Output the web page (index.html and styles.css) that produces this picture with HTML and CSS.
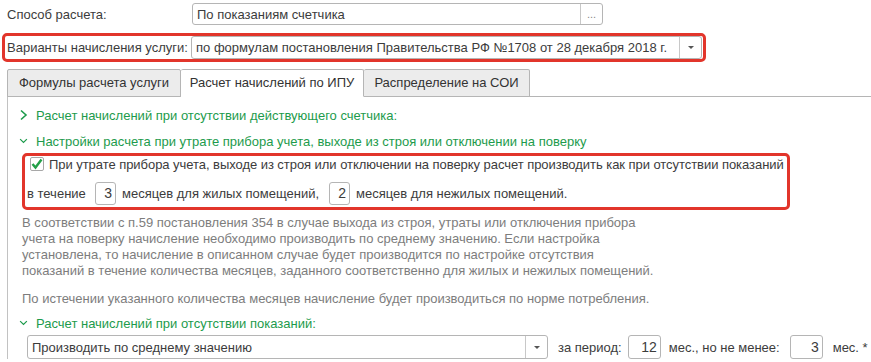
FILE: index.html
```html
<!DOCTYPE html>
<html lang="ru">
  <head>
    <meta charset="UTF-8" />
    <title>Способ расчета</title>
    <link rel="stylesheet" href="styles.css">
  </head>
  <body>
    <div class="forma">
      <div class="fila">
        <span class="etiqueta">Способ расчета:</span>
        <div class="campo campo-metodo">
          <span class="valor">По показаниям счетчика</span>
          <span class="boton-ver">...</span>
        </div>
      </div>

      <div class="fila marcada">
        <span class="etiqueta">Варианты начисления услуги:</span>
        <div class="campo campo-variante">
          <span class="valor">по формулам постановления Правительства РФ №1708 от 28 декабря 2018 г.</span>
          <span class="boton-lista"><span class="flecha"></span></span>
        </div>
      </div>

      <div class="pestanas">
        <div class="pestana">Формулы расчета услуги</div>
        <div class="pestana activa">Расчет начислений по ИПУ</div>
        <div class="pestana">Распределение на СОИ</div>
      </div>

      <div class="panel">
        <div class="grupo">
          <svg class="chevron" width="9" height="12" viewBox="0 0 9 12"><path d="M2 1.5 L7 6 L2 10.5" fill="none" stroke="#1d9b4c" stroke-width="1.6"/></svg>
          Расчет начислений при отсутствии действующего счетчика:
        </div>
        <div class="grupo">
          <svg class="chevron" width="9" height="12" viewBox="0 0 12 12"><path d="M1.5 3.5 L6 8 L10.5 3.5" fill="none" stroke="#1d9b4c" stroke-width="1.6"/></svg>
          Настройки расчета при утрате прибора учета, выходе из строя или отключении на поверку
        </div>

        <div class="caja-roja">
          <div class="linea-check">
            <span class="check">
              <svg width="14" height="14" viewBox="0 0 14 14"><path d="M2.5 7 L5.5 10.5 L11.5 2.5" fill="none" stroke="#23a048" stroke-width="2.4"/></svg>
            </span>
            При утрате прибора учета, выходе из строя или отключении на поверку расчет производить как при отсутствии показаний
          </div>
          <div class="linea-meses">
            <span>в течение</span>
            <span class="numero n-corto">3</span>
            <span>месяцев для жилых помещений,</span>
            <span class="numero n-corto">2</span>
            <span>месяцев для нежилых помещений.</span>
          </div>
        </div>

        <p class="nota">
          В соответствии с п.59 постановления 354 в случае выхода из строя, утраты или отключения прибора<br>
          учета на поверку начисление необходимо производить по среднему значению. Если настройка<br>
          установлена, то начисление в описанном случае будет производится по настройке отсутствия<br>
          показаний в течение количества месяцев, заданного соответственно для жилых и нежилых помещений.
        </p>
        <p class="nota nota-2">По истечении указанного количества месяцев начисление будет производиться по норме потребления.</p>

        <div class="grupo grupo-3">
          <svg class="chevron" width="9" height="12" viewBox="0 0 12 12"><path d="M1.5 3.5 L6 8 L10.5 3.5" fill="none" stroke="#1d9b4c" stroke-width="1.6"/></svg>
          Расчет начислений при отсутствии показаний:
        </div>

        <div class="linea-final">
          <div class="campo campo-promedio">
            <span class="valor">Производить по среднему значению</span>
            <span class="boton-lista"><span class="flecha"></span></span>
          </div>
          <span class="texto-periodo">за период:</span>
          <span class="numero n-largo">12</span>
          <span class="texto-menos">мес., но не менее:</span>
          <span class="numero n-largo">3</span>
          <span class="texto-mes">мес. *</span>
        </div>
      </div>
    </div>
  </body>
</html>
```

FILE: styles.css
```css
body {
  margin: 0;
  font-family: "Liberation Sans", Arial, sans-serif;
  font-size: 13px;
  color: #3c3c3c;
  background: white;
  overflow: hidden;
}

.forma {
  padding-top: 3px;
}

.fila {
  display: flex;
  align-items: center;
  height: 22px;
  padding-left: 7px;
}

.etiqueta {
  width: 185px;
  flex-shrink: 0;
}

/* Campos de entrada con borde gris redondeado */
.campo {
  display: flex;
  align-items: center;
  border: 1px solid #b5b5b5;
  border-radius: 3px;
  box-sizing: border-box;
  background: white;
}

.campo .valor {
  flex: 1;
  padding-left: 4px;
  white-space: nowrap;
  overflow: hidden;
}

.campo-metodo {
  width: 411px;
  height: 22px;
}

.boton-ver,
.boton-lista {
  width: 21px;
  height: 100%;
  border-left: 1px solid #c8c8c8;
  display: flex;
  align-items: center;
  justify-content: center;
  color: #888;
  font-size: 11px;
}

.flecha {
  width: 0;
  height: 0;
  border-left: 3px solid transparent;
  border-right: 3px solid transparent;
  border-top: 3px solid #555;
}

/* Fila marcada en rojo */
.marcada {
  margin: 8px 0 0 2px;
  width: 704px;
  height: 29px;
  box-sizing: border-box;
  border: 3px solid #e2352b;
  border-radius: 5px;
  padding-left: 2px;
}

.marcada .etiqueta {
  width: 184px;
}

.campo-variante {
  width: 511px;
  height: 23px;
}

/* Pestañas */
.pestanas {
  display: flex;
  margin: 7px 0 0 7px;
  border-bottom: 1px solid #b5b5b5;
  height: 27px;
}

.pestana {
  box-sizing: border-box;
  height: 28px;
  line-height: 26px;
  text-align: center;
  white-space: nowrap;
  background: #ececec;
  border: 1px solid #b5b5b5;
  border-left: none;
  border-radius: 2px 2px 0 0;
  color: #333;
}

.pestana:first-child {
  border-left: 1px solid #b5b5b5;
  width: 174px;
}

.pestana.activa {
  background: white;
  border-bottom-color: white;
  width: 183px;
}

.pestanas .pestana:last-child {
  width: 166px;
}

.panel {
  margin-left: 7px;
  border-left: 1px solid #c2c2c2;
  padding: 10px 0 0 11px;
}

.grupo {
  display: flex;
  align-items: center;
  height: 16px;
  color: #1d9b4c;
  margin-bottom: 10px;
}

.chevron {
  margin-right: 8px;
}

.caja-roja {
  margin-left: 3px;
  width: 768px;
  box-sizing: border-box;
  border: 3px solid #e2352b;
  border-radius: 5px;
  padding: 0 0 2px 2px;
  margin-top: -6px;
}

.linea-check {
  display: flex;
  align-items: center;
  height: 16px;
  white-space: nowrap;
  padding-left: 3px;
  letter-spacing: -0.05px;
}

.check {
  width: 14px;
  height: 14px;
  box-sizing: border-box;
  border: 1px solid #a8a8a8;
  border-radius: 2px;
  margin-right: 5px;
  display: flex;
  align-items: center;
  justify-content: center;
}

.check svg {
  flex-shrink: 0;
}

.linea-meses {
  display: flex;
  align-items: center;
  margin-top: 10px;
  height: 23px;
}

.numero {
  box-sizing: border-box;
  height: 23px;
  border: 1px solid #b5b5b5;
  border-radius: 3px;
  text-align: right;
  padding-right: 3px;
  line-height: 21px;
  font-size: 14px;
}

.n-corto {
  width: 21px;
  margin: 0 6px 0 0;
}

.linea-meses span:first-child {
  width: 68px;
}

.linea-meses span:nth-child(3) {
  width: 207px;
}

.nota {
  margin: 5px 0 0 3px;
  line-height: 16px;
  color: #7d7d7d;
}

.nota-2 {
  margin-top: 12px;
}

.grupo-3 {
  margin-top: 8px;
  margin-bottom: 4px;
}

.linea-final {
  display: flex;
  align-items: center;
  height: 24px;
  padding-left: 8px;
}

.campo-promedio {
  width: 521px;
  height: 24px;
}

.n-largo {
  width: 33px;
  height: 24px;
  line-height: 22px;
}

.texto-periodo {
  margin: 0 6px 0 10px;
}

.texto-menos {
  margin: 0 10px 0 8px;
}

.texto-mes {
  margin-left: 10px;
}
```
